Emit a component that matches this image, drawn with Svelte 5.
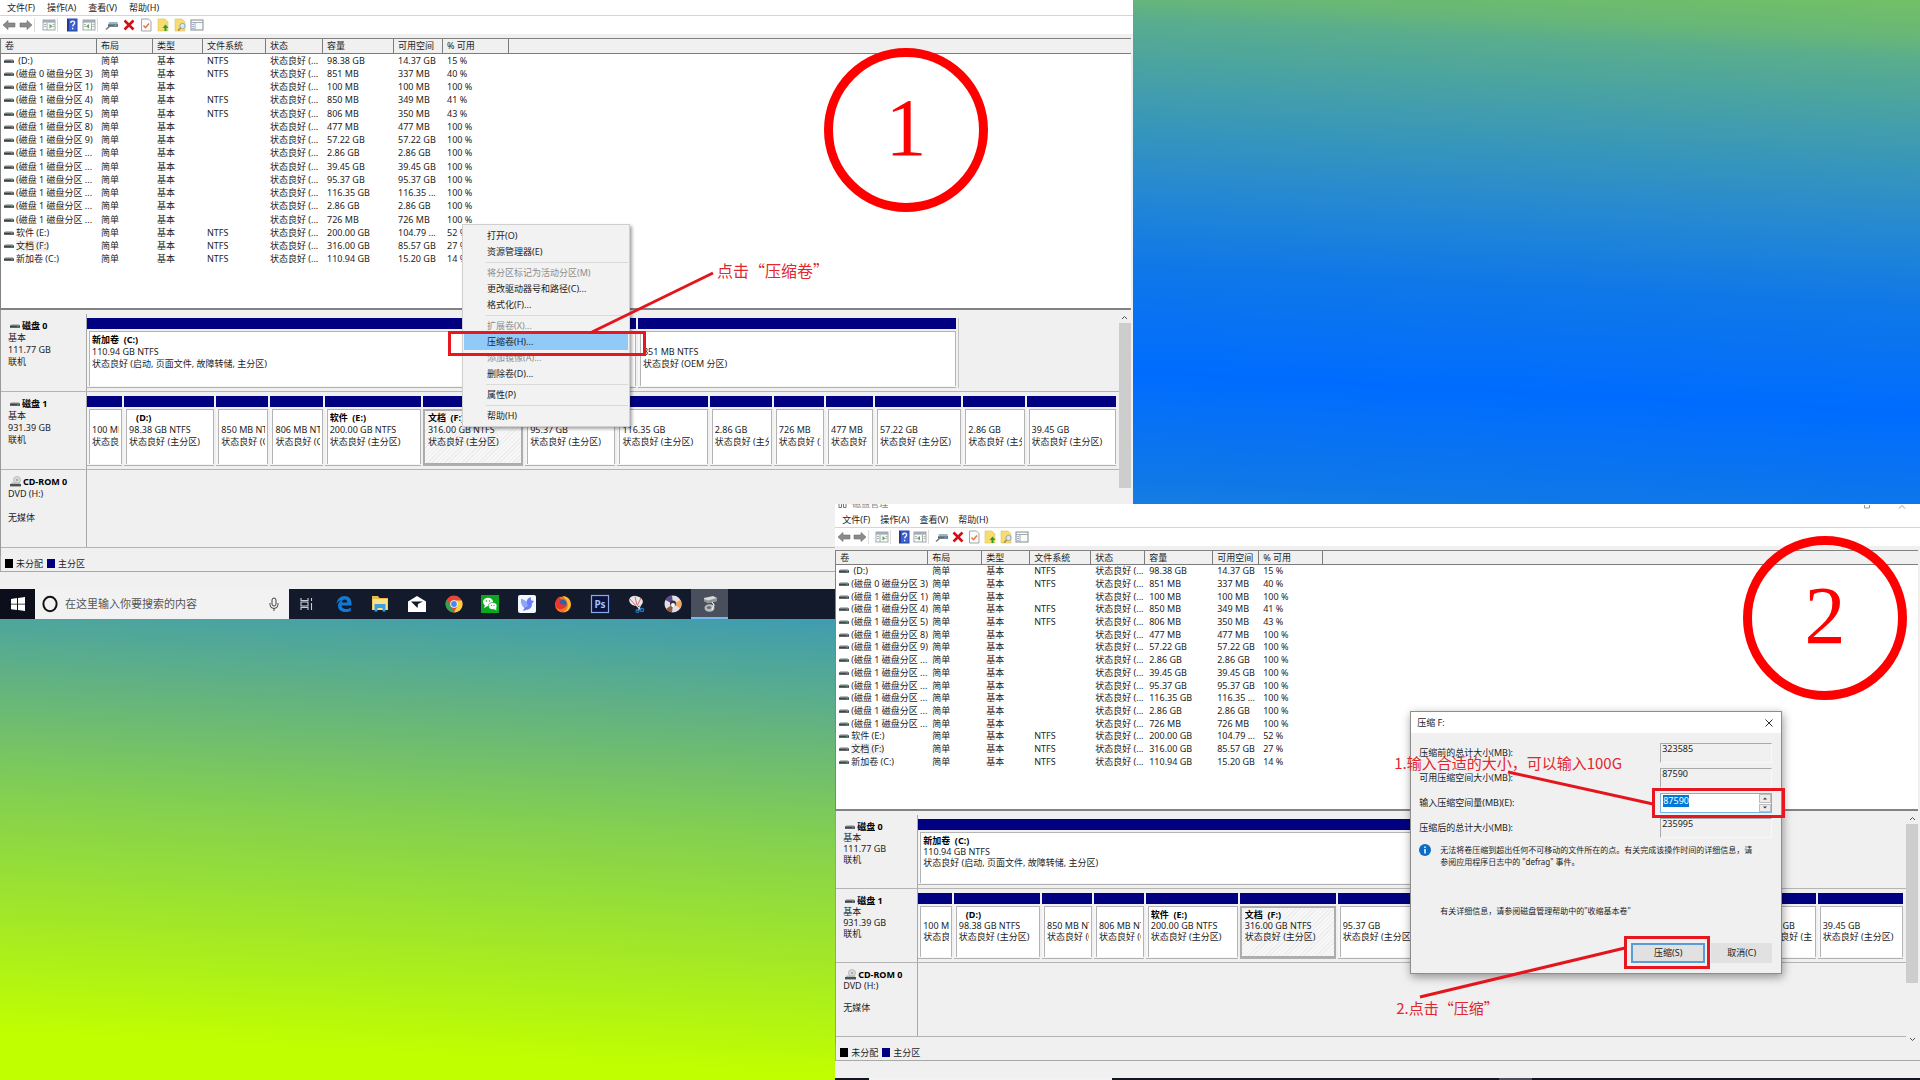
<script>
  import { onMount } from 'svelte';

  let shrinkInput;
  let amount = $state('87590');

  const menus = ['文件(F)', '操作(A)', '查看(V)', '帮助(H)'];

  const tools = ['back', 'forward', '|', 'console', '|', 'help', 'panel', '|', 'drive', 'delete', 'check', 'folderUp', 'folderFind', 'props'];

  const headers = ['卷', '布局', '类型', '文件系统', '状态', '容量', '可用空间', '% 可用'];

  const volumes = [
    ['\u00a0(D:)', 'NTFS', '98.38 GB', '14.37 GB', '15 %'],
    ['(磁盘 0 磁盘分区 3)', 'NTFS', '851 MB', '337 MB', '40 %'],
    ['(磁盘 1 磁盘分区 1)', '', '100 MB', '100 MB', '100 %'],
    ['(磁盘 1 磁盘分区 4)', 'NTFS', '850 MB', '349 MB', '41 %'],
    ['(磁盘 1 磁盘分区 5)', 'NTFS', '806 MB', '350 MB', '43 %'],
    ['(磁盘 1 磁盘分区 8)', '', '477 MB', '477 MB', '100 %'],
    ['(磁盘 1 磁盘分区 9)', '', '57.22 GB', '57.22 GB', '100 %'],
    ['(磁盘 1 磁盘分区 ...', '', '2.86 GB', '2.86 GB', '100 %'],
    ['(磁盘 1 磁盘分区 ...', '', '39.45 GB', '39.45 GB', '100 %'],
    ['(磁盘 1 磁盘分区 ...', '', '95.37 GB', '95.37 GB', '100 %'],
    ['(磁盘 1 磁盘分区 ...', '', '116.35 GB', '116.35 ...', '100 %'],
    ['(磁盘 1 磁盘分区 ...', '', '2.86 GB', '2.86 GB', '100 %'],
    ['(磁盘 1 磁盘分区 ...', '', '726 MB', '726 MB', '100 %'],
    ['软件 (E:)', 'NTFS', '200.00 GB', '104.79 ...', '52 %'],
    ['文档 (F:)', 'NTFS', '316.00 GB', '85.57 GB', '27 %'],
    ['新加卷 (C:)', 'NTFS', '110.94 GB', '15.20 GB', '14 %'],
  ];

  const disks = [
    {
      name: '磁盘 0', kind: '基本', size: '111.77 GB', state: '联机',
      parts: [
        { w: 549, title: '新加卷  (C:)', size: '110.94 GB NTFS', state: '状态良好 (启动, 页面文件, 故障转储, 主分区)' },
        { w: 318, title: '', size: '851 MB NTFS', state: '状态良好 (OEM 分区)' },
        { w: 157, free: true },
      ],
    },
    {
      name: '磁盘 1', kind: '基本', size: '931.39 GB', state: '联机',
      parts: [
        { w: 35, title: '', size: '100 MB', state: '状态良好' },
        { w: 90, title: '   (D:)', size: '98.38 GB NTFS', state: '状态良好 (主分区)' },
        { w: 52, title: '', size: '850 MB NTFS', state: '状态良好 (OEM 分区)' },
        { w: 52, title: '', size: '806 MB NTFS', state: '状态良好 (OEM 分区)' },
        { w: 96, title: '软件  (E:)', size: '200.00 GB NTFS', state: '状态良好 (主分区)' },
        { w: 100, title: '文档  (F:)', size: '316.00 GB NTFS', state: '状态良好 (主分区)', selected: true },
        { w: 90, title: '', size: '95.37 GB', state: '状态良好 (主分区)' },
        { w: 90, title: '', size: '116.35 GB', state: '状态良好 (主分区)' },
        { w: 62, title: '', size: '2.86 GB', state: '状态良好 (主分区)' },
        { w: 50, title: '', size: '726 MB', state: '状态良好 (主分区)' },
        { w: 47, title: '', size: '477 MB', state: '状态良好' },
        { w: 86, title: '', size: '57.22 GB', state: '状态良好 (主分区)' },
        { w: 61, title: '', size: '2.86 GB', state: '状态良好 (主分区)' },
        { w: 89, title: '', size: '39.45 GB', state: '状态良好 (主分区)' },
      ],
    },
    { name: 'CD-ROM 0', kind: 'DVD (H:)', size: '', state: '无媒体', cd: true, parts: [] },
  ];

  const contextMenu = [
    { label: '打开(O)' },
    { label: '资源管理器(E)' },
    null,
    { label: '将分区标记为活动分区(M)', disabled: true },
    { label: '更改驱动器号和路径(C)...' },
    { label: '格式化(F)...' },
    null,
    { label: '扩展卷(X)...', disabled: true },
    { label: '压缩卷(H)...', active: true },
    { label: '添加镜像(A)...', disabled: true },
    { label: '删除卷(D)...' },
    null,
    { label: '属性(P)' },
    null,
    { label: '帮助(H)' },
  ];

  const apps = ['taskview', 'edge', 'explorer', 'mail', 'chrome', 'wechat', 'bird', 'firefox', 'ps', 'snip', 'disc', 'diskmgmt'];

  const colsOne = [96, 56, 50, 63, 57, 71, 49, 66];
  const colsTwo = [92, 54, 48, 61, 54, 68, 46, 64];

  onMount(() => {
    shrinkInput.focus();
    shrinkInput.select();
  });
</script>

{#snippet driveIcon()}
  <svg class="drive" width="10" height="6" viewBox="0 0 10 6" aria-hidden="true">
    <path d="M1.5 1h7l1.5 1.6H0z" fill="#b9bcbc" />
    <rect y="2.4" width="10" height="2.4" fill="#3d4446" />
    <rect x="7" y="3" width="2" height="1" fill="#3f8a62" />
  </svg>
{/snippet}

{#snippet toolIcon(name)}
  <svg width="14" height="14" viewBox="0 0 14 14" aria-hidden="true">
    {#if name === 'back'}
      <path d="M1 7l5-4.6v2.6h7v4H6v2.6z" fill="#8b8b8b" stroke="#6f6f6f" stroke-width=".6" />
    {:else if name === 'forward'}
      <path d="M13 7L8 2.4v2.6H1v4h7v2.6z" fill="#8b8b8b" stroke="#6f6f6f" stroke-width=".6" />
    {:else if name === 'console' || name === 'panel'}
      <rect x="1" y="2" width="12" height="10" fill="#f7f9f7" stroke="#a3a9ae" />
      <rect x="1" y="2" width="12" height="2.6" fill="#a4abb3" />
      <path d={name === 'console' ? 'M5 5v7' : 'M9.5 5v7'} stroke="#a3a9ae" />
      <path d={name === 'console' ? 'M7.500 6v4.400L10.500 8.200z' : 'M7 6v4.400L4 8.200z'} fill="#5aab50" />
      <path d="M2 6.5h2M2 8.500h2M10.500 6.500h2M10.500 8.500h2" stroke="#9aa2aa" stroke-width=".8" />
    {:else if name === 'help'}
      <rect x="2.5" y="1" width="9.5" height="12" fill="#3f60d2" stroke="#2a45a6" />
      <rect x="2" y="1" width="2" height="12" fill="#1f3a96" />
      <path d="M5.8 5c0-2.6 4-2.4 3.8 0-.1 1.4-1.9 1.5-1.9 3.2M7.700 9.800v1.400" fill="none" stroke="#fff" stroke-width="1.3" />
    {:else if name === 'drive'}
      <path d="M4 4h8.500L13 7H3z" fill="#9fb4c0" />
      <rect x="3" y="6.400" width="10" height="2.400" fill="#536c78" />
      <path d="M1 11.500l4-3.500" stroke="#7a7a7a" stroke-width="1.600" />
      <rect x="9.500" y="7" width="2" height="1" fill="#58c28c" />
    {:else if name === 'delete'}
      <path d="M2.5 2.5l9 9M11.5 2.5l-9 9" stroke="#cf1017" stroke-width="2.6" />
    {:else if name === 'check'}
      <path d="M2.5 1h7l2.500 2.500V13h-9.500z" fill="#fbfbfb" stroke="#a5a5a5" />
      <path d="M4.5 7.500l2 2.200L10 5.500" fill="none" stroke="#e0723a" stroke-width="1.4" />
    {:else if name === 'folderUp'}
      <path d="M2 1h7l3 3v9H2z" fill="#f7dc6f" stroke="#e0c254" stroke-width=".6" />
      <path d="M9.500 6.500L12.500 10h-2v3h-2v-3h-2z" fill="#2e9c2c" />
    {:else if name === 'folderFind'}
      <path d="M2 1h7l3 3v9H2z" fill="#f7dc6f" stroke="#e0c254" stroke-width=".6" />
      <circle cx="9.500" cy="8" r="2.600" fill="#dceaf4" stroke="#8ba6b8" />
      <path d="M7.500 10L5 12.800" stroke="#9b8a58" stroke-width="1.400" />
    {:else}
      <rect x="1" y="2" width="12" height="10" fill="#fafafa" stroke="#828b92" />
      <path d="M1 4.500h12M5 4.500V12" stroke="#a3abb1" />
      <path d="M2.200 6.500h1.600M2.200 8.500h1.600M2.200 10.400h1.600" stroke="#6189b5" stroke-width=".8" />
    {/if}
  </svg>
{/snippet}

{#snippet appIcon(name)}
  <svg width="20" height="20" viewBox="0 0 20 20" aria-hidden="true">
    {#if name === 'taskview'}
      <g fill="none" stroke="#c9ccd3" stroke-width="1.1">
        <path d="M4 4v2.500h7V4M4 16v-2.500h7V16" />
        <rect x="4" y="8" width="7" height="4" />
        <path d="M14.500 4v3M14.500 9v7" />
      </g>
    {:else if name === 'edge'}
      <path d="M2.500 10C3 5 6.500 2 10.500 2c4.500 0 7 3 7 7.500v2H7.500c.2 2.200 2 3.500 4.500 3.500 1.800 0 3.300-.5 4.700-1.300v3.200C15.200 17.700 13.500 18 11.500 18c-4.500 0-7.500-2.500-7.500-6.300 0-2.500 1.500-4.500 3.600-5.500C5 6.700 3.500 8 2.500 10zM7.700 8.500h5.700c0-2-1-3-2.700-3s-2.700 1.200-3 3z" fill="#0f7bd7" />
    {:else if name === 'explorer'}
      <path d="M2 2h6l1.500 2H18v12H2z" fill="#e9b949" />
      <rect x="2.500" y="5" width="15" height="11" fill="#fbe08b" />
      <path d="M4.500 17.500V10h11v7.500h-3V14h-5v3.500z" fill="#3b9fe0" />
    {:else if name === 'mail'}
      <path d="M1 7.500L10 2l9 5.500V18H1z" fill="#fff" />
      <path d="M4 7.500h12L11 10l-.5 4z" fill="#111a2c" />
    {:else if name === 'chrome'}
      <circle cx="10" cy="10" r="8.500" fill="#e2493b" />
      <path d="M3 5.500l4 7.500 3 5.500A8.500 8.500 0 0 1 3 5.500z" fill="#2da456" />
      <path d="M17.800 6.500A8.500 8.500 0 0 1 10 18.500l3.500-7L12 6.500z" fill="#fbd03b" />
      <circle cx="10" cy="10" r="3.800" fill="#fff" />
      <circle cx="10" cy="10" r="2.900" fill="#4688f1" />
    {:else if name === 'wechat'}
      <rect x="1" y="1" width="18" height="18" fill="#0aa81c" />
      <ellipse cx="8" cy="8" rx="5" ry="4.200" fill="#fff" />
      <path d="M5 11l-1 3 3-1.500z" fill="#fff" />
      <ellipse cx="12.800" cy="12" rx="4.200" ry="3.500" fill="#fff" stroke="#0aa81c" stroke-width=".7" />
      <path d="M14 15l2.500 1.500L16 13.500z" fill="#fff" />
      <g fill="#0aa81c">
        <circle cx="6.400" cy="7" r=".7" /><circle cx="9.500" cy="7" r=".7" />
        <circle cx="11.500" cy="11.300" r=".6" /><circle cx="14" cy="11.300" r=".6" />
      </g>
    {:else if name === 'bird'}
      <rect x="1" y="1" width="18" height="18" rx="2" fill="#f4f7ff" />
      <path d="M4 5c2.500.5 4 1.500 5.500 3 .3-2.500 1.800-4.500 4.500-5-.4 1.500 0 2.500.5 3.500L17 7l-2 2.500c0 4-2 6-6 6.500l-3 1c.5-1.500 1-2 1.500-3C5 12 4 9 4 5z" fill="#6b7ff2" />
      <path d="M4 5c2.500.5 4 1.500 5.500 3l1.500 4-3.500 2C5 12 4 9 4 5z" fill="#8aa6fb" />
    {:else if name === 'firefox'}
      <circle cx="10" cy="10.500" r="8" fill="#f4741f" />
      <path d="M10 2c5 .5 8 4 7.700 9-.5 4-3.700 7-7.700 7.300 4-2 5.500-5 4.500-9C14 6 12 4.500 10 2z" fill="#fcc22d" />
      <circle cx="9.500" cy="9.800" r="4.200" fill="#2c5fb8" />
      <path d="M2.500 8c1-3 2.500-4.500 4-5.500 0 2 1 2.500 3 3-2 .5-3 1.500-2.500 3 .5 2 3 3 6 1.500-1 4-4 6-7 5-3-1-4-4-3.500-7z" fill="#e8362b" />
    {:else if name === 'ps'}
      <rect x="1.500" y="1.500" width="17" height="17" fill="#0a1340" stroke="#8aa9e8" stroke-width="1.200" />
      <text x="10" y="14" class="ps-text">Ps</text>
    {:else if name === 'snip'}
      <ellipse cx="9" cy="7" rx="7" ry="5" transform="rotate(15 9 7)" fill="#ece6e6" />
      <path d="M3 5l6 7M8 2.500l2 9M14 4l-4 8" fill="none" stroke="#cf5b63" stroke-width=".9" />
      <path d="M9 11l5 5M14 10l-3 7" stroke="#d8dadd" stroke-width="1.200" />
      <circle cx="15" cy="16" r="1.700" fill="none" stroke="#1f7cc4" stroke-width="1.200" />
      <circle cx="10.500" cy="17" r="1.500" fill="none" stroke="#1f7cc4" stroke-width="1.200" />
    {:else if name === 'disc'}
      <circle cx="10" cy="10" r="8.500" fill="#e4dfe6" />
      <path d="M10 10L2.500 6A8.500 8.500 0 0 1 9 1.500z" fill="#5c4a8c" />
      <path d="M10 10l7.500-4a8.500 8.500 0 0 1 0 8.500z" fill="#efa866" />
      <path d="M10 10l-7 5a8.500 8.500 0 0 0 6 3.500z" fill="#8f5d43" />
      <circle cx="10" cy="9.500" r="3" fill="#2e3146" />
      <circle cx="10" cy="11" r="2" fill="#fff" />
    {:else}
      <path d="M4 4l9-2 4 2v3l-9 2-4-2z" fill="#d7d9da" />
      <path d="M4 5l4 1.500L17 4v3L8 9 4 7z" fill="#8f9496" />
      <ellipse cx="9.500" cy="14" rx="5" ry="3.800" fill="#b9bdbf" />
      <ellipse cx="9" cy="13.500" rx="2.200" ry="1.600" fill="#6a7073" />
      <path d="M12 8l2 3-2 5" fill="none" stroke="#eceeef" stroke-width="1.200" />
    {/if}
  </svg>
{/snippet}

{#snippet console_(cols)}
  <div class="menubar">
    {#each menus as label}
      <button type="button">{label}</button>
    {/each}
  </div>
  <div class="toolbar">
    {#each tools as name}
      {#if name === '|'}
        <span class="tool-sep"></span>
      {:else}
        <button type="button" class="tool" aria-label={name}>{@render toolIcon(name)}</button>
      {/if}
    {/each}
  </div>

  <div class="list">
    <table>
      <colgroup>
        {#each cols as w}<col style="width: {w}px" />{/each}
        <col />
      </colgroup>
      <thead>
        <tr>
          {#each headers as h}<th>{h}</th>{/each}
          <th></th>
        </tr>
      </thead>
      <tbody>
        {#each volumes as [name, fs, size, free, pct]}
          <tr>
            <td class="name">{@render driveIcon()}<span class:hot={name === '文档 (F:)'}>{name}</span></td>
            <td>简单</td>
            <td>基本</td>
            <td>{fs}</td>
            <td>状态良好 (...</td>
            <td>{size}</td>
            <td>{free}</td>
            <td>{pct}</td>
            <td></td>
          </tr>
        {/each}
      </tbody>
    </table>
  </div>

  <div class="graph">
    <div class="disks">
      {#each disks as disk}
        <div class="disk">
          <div class="disk-label">
            <strong>
              {#if disk.cd}
                <svg class="drive" width="11" height="12" viewBox="0 0 11 12" aria-hidden="true">
                  <circle cx="7" cy="4" r="3.500" fill="#d9dbdb" stroke="#a9acac" stroke-width=".7" />
                  <circle cx="7" cy="4" r="1" fill="#9a9d9d" />
                  <path d="M1.500 6.500h8l1 2H.500z" fill="#b9bcbc" />
                  <rect y="8" width="11" height="2.400" fill="#4b5254" />
                </svg>
              {:else}
                {@render driveIcon()}
              {/if}
              {disk.name}
            </strong>
            <span>{disk.kind}</span>
            <span>{disk.size}</span>
            <span>{disk.state}</span>
          </div>
          <div class="parts">
            {#each disk.parts as p}
              <div class="part" class:free={p.free} class:selected={p.selected} style="flex-grow: {p.w}">
                {#if !p.free}
                  <div class="bar"></div>
                  <div class="box">
                    <strong>{p.title}</strong>
                    <span>{p.size}</span>
                    <span>{p.state}</span>
                  </div>
                {/if}
              </div>
            {/each}
          </div>
        </div>
      {/each}
    </div>
    <div class="scroll">
      <svg width="7" height="5" viewBox="0 0 7 5"><path d="M1 4l2.500-2.500L6 4" fill="none" stroke="#505050" /></svg>
      <div class="thumb"></div>
      <svg width="7" height="5" viewBox="0 0 7 5"><path d="M1 1l2.500 2.500L6 1" fill="none" stroke="#505050" /></svg>
    </div>
  </div>

  <div class="legend">
    <i class="key black"></i><span>未分配</span>
    <i class="key navy"></i><span>主分区</span>
  </div>
  <div class="status"></div>
{/snippet}

<main class="desktop">
  <section class="win one">
    {@render console_(colsOne)}

    <div class="taskbar">
      <button type="button" class="start" aria-label="start">
        <svg width="14" height="14" viewBox="0 0 14 14"><path d="M0 2l6-.9v5.600H0zM7 1l7-1v6.700H7zM0 7.500h6v5.600L0 12.200zM7 7.500h7V14l-7-.9z" fill="#fff" /></svg>
      </button>
      <label class="search">
        <svg width="16" height="18" viewBox="0 0 16 18"><ellipse cx="8" cy="9" rx="6.600" ry="7.200" fill="none" stroke="#111" stroke-width="2" /></svg>
        <input type="text" placeholder="在这里输入你要搜索的内容" aria-label="搜索" />
        <svg width="10" height="14" viewBox="0 0 10 14"><rect x="3" y="1" width="4" height="8" rx="2" fill="none" stroke="#444" /><path d="M1 6v1.500a4 4 0 0 0 8 0V6M5 11.500V14" fill="none" stroke="#444" /></svg>
      </label>
      <div class="apps">
        {#each apps as name}
          <button type="button" class:running={name === 'diskmgmt'} aria-label={name}>{@render appIcon(name)}</button>
        {/each}
      </div>
    </div>

    <ul class="context">
      {#each contextMenu as item}
        {#if item}
          <li><button type="button" disabled={item.disabled} class:active={item.active}>{item.label}</button></li>
        {:else}
          <li class="rule"></li>
        {/if}
      {/each}
    </ul>

    <div class="mark mark-shrink"></div>
    <svg class="lines" aria-hidden="true"><path d="M592 332L713 273" /></svg>
    <p class="note note-menu">点击“压缩卷”</p>
    <div class="step">1</div>
  </section>

  <section class="win two">
    <div class="titlebar">
      <svg width="9" height="5" viewBox="0 0 9 5"><path d="M1 0v3.500h2.500V0M5.500 0v3.500H8V0" fill="none" stroke="#777" /></svg>
      <span>磁盘管理</span>
      <svg width="8" height="4" viewBox="0 0 8 4"><path d="M1.500 0v3h5V0" fill="none" stroke="#999" /></svg>
      <svg width="8" height="4" viewBox="0 0 8 4"><path d="M1 3.500L4 .5l3 3" fill="none" stroke="#999" /></svg>
    </div>
    {@render console_(colsTwo)}
    <div class="taskbar-edge"><i></i><i></i><i></i></div>

    <div class="dialog" role="dialog" aria-label="压缩 F:">
      <header>
        <span>压缩 F:</span>
        <button type="button" aria-label="关闭">
          <svg width="8" height="8" viewBox="0 0 8 8"><path d="M.5.5l7 7M7.500.5l-7 7" stroke="#333" /></svg>
        </button>
      </header>
      <div class="fields">
        <label for="before">压缩前的总计大小(MB):</label>
        <input id="before" readonly value="323585" />
        <label for="avail">可用压缩空间大小(MB):</label>
        <input id="avail" readonly value="87590" />
        <label for="amount">输入压缩空间量(MB)(E):</label>
        <div class="spin">
          <input id="amount" type="text" bind:value={amount} bind:this={shrinkInput} />
          <div class="arrows">
            <button type="button" aria-label="增加"><svg width="4" height="3" viewBox="0 0 4 3"><path d="M0 2.500L2 .5l2 2z" fill="#333" /></svg></button>
            <button type="button" aria-label="减少"><svg width="4" height="3" viewBox="0 0 4 3"><path d="M0 .5l2 2 2-2z" fill="#333" /></svg></button>
          </div>
        </div>
        <label for="after">压缩后的总计大小(MB):</label>
        <input id="after" readonly value="235995" />
      </div>
      <div class="info">
        <svg width="12" height="12" viewBox="0 0 12 12"><circle cx="6" cy="6" r="6" fill="#0a6cc4" /><path d="M6 2.400v1.500M6 5v4.600" stroke="#fff" stroke-width="1.500" /></svg>
        <p>无法将卷压缩到超出任何不可移动的文件所在的点。有关完成该操作时间的详细信息，请<br />参阅应用程序日志中的 "defrag" 事件。</p>
      </div>
      <p class="more">有关详细信息，请参阅磁盘管理帮助中的"收缩基本卷"</p>
      <footer>
        <button type="button" class="primary">压缩(S)</button>
        <button type="button">取消(C)</button>
      </footer>
    </div>

    <div class="mark mark-amount"></div>
    <div class="mark mark-ok"></div>
    <svg class="lines" aria-hidden="true"><path d="M673 268L818 300M585 493L790 444" /></svg>
    <p class="note note-size">1.输入合适的大小，可以输入100G</p>
    <p class="note note-ok">2.点击“压缩”</p>
    <div class="step">2</div>
  </section>
</main>

<style>
  :global(body) { margin: 0; }
  .desktop {
    position: relative; height: 100vh; overflow: hidden;
    font: 9px/12px "Noto Sans", "Noto Sans CJK SC", sans-serif; color: #1c1c1c;
    background: linear-gradient(183deg,
      rgb(98,178,130) 3%, rgb(66,158,172) 11%, rgb(39,138,208) 19%, rgb(15,120,232) 26%,
      rgb(0,108,255) 35%,
      rgb(15,120,232) 44%, rgb(39,138,208) 51%, rgb(66,158,172) 58%, rgb(98,178,130) 66%,
      rgb(132,208,80) 76%, rgb(192,255,0) 96%);
  }
  .desktop::before {
    content: ''; position: absolute; inset: 0;
    background: linear-gradient(183deg, rgba(120,198,90,.7), rgba(98,178,130,0) 5%);
  }
  button, input {
    font: inherit; color: inherit; border: 0; padding: 0; margin: 0;
    background: none; border-radius: 0; min-width: 0; outline: none;
  }
  p, ul { margin: 0; padding: 0; list-style: none; }
  svg { display: block; flex-shrink: 0; }

  .win { position: absolute; background: #f0f0f0; }
  .one {
    top: 0; left: 0; width: 59%;
    --line: 12px; --tool: 17px; --menu-gap: 12px; --pad: 0px; --head: 15px;
    --table: 227px; --list: 272px; --disk: 78px; --label: 86px; --thumb: 165px;
  }
  .two {
    top: 504px; left: 43.5%; right: 0;
    --line: 11px; --tool: 16px; --menu-gap: 10px; --pad: 1px; --head: 14px;
    --table: 217px; --list: 261px; --disk: 74px; --label: 82px; --thumb: 159px;
  }

  .titlebar {
    display: flex; align-items: flex-end; gap: 5px; height: 5px;
    padding: 0 14px 3px 3px; overflow: hidden; background: #fff;
    line-height: 10px; color: #888;
  }
  .titlebar span { margin-right: auto; }
  .titlebar svg + svg { margin-left: 22px; }
  .titlebar svg:first-child { align-self: flex-start; }

  .menubar {
    display: flex; gap: var(--menu-gap); height: 15px; padding-left: 7px;
    background: #fff; border-bottom: 1px solid #d4d4d4;
  }
  .toolbar {
    display: flex; align-items: center; height: 18px; padding-left: var(--pad);
    background: #fff; border-bottom: 4px solid #f0f0f0;
  }
  .tool { width: var(--tool); display: flex; justify-content: center; }
  .tool-sep { width: 6px; height: 14px; border-left: 1px solid #dcdcdc; box-sizing: border-box; }

  .list {
    height: var(--list); margin-right: 2px; background: #fff;
    border: 1px solid #828282; border-width: 1px 0 2px 1px; box-sizing: border-box;
  }
  table { width: 100%; height: var(--table); table-layout: fixed; border-collapse: separate; border-spacing: 0; }
  th {
    height: var(--head); padding: 0 0 0 4px; box-sizing: border-box; font-weight: 400; text-align: left;
    background: #f0f0f0; border-right: 1px solid #7c7c7c; border-bottom: 1px solid #7c7c7c;
  }
  th:last-child { border-right: 0; }
  td { padding: 0 0 0 4px; white-space: nowrap; overflow: hidden; line-height: 12px; }
  .name { padding-left: 3px; }
  .name :global(svg) { display: inline-block; margin-right: 2px; }
  .hot { background: #f2f2f2; }

  .graph { display: flex; border-left: 1px solid #9a9a9a; }
  .disks { flex: 1; min-width: 0; padding: 4px 0 8px; }
  .disk { display: flex; height: var(--disk); box-sizing: border-box; border-bottom: 1px solid #b4b4b4; }
  .disk-label {
    width: var(--label); flex-shrink: 0; box-sizing: border-box; padding: 6px 0 0 7px;
    border-right: 1px solid #a8a8a8; line-height: var(--line);
  }
  .disk-label span, .disk-label strong { display: block; min-height: var(--line); }
  .disk-label strong { display: flex; align-items: center; gap: 2px; padding-left: 2px; height: var(--line); color: #000; }
  .parts { flex: 1; min-width: 0; display: flex; gap: 2px; padding: 4px 3px 3px 0; }
  .part { flex: 0 1 0; min-width: 0; display: flex; flex-direction: column; background: #f6f6f6; border-bottom: 1px solid #b0b0b0; }
  .part.free { background: none; border-bottom: 0; border-left: 1px solid #c4c4c4; }
  .bar { height: 11px; background: #000080; border-bottom: 2px solid #f0f0f0; }
  .box {
    flex: 1; display: flex; flex-direction: column; margin: 0 0 1px 2px; padding: 2px 2px 0; overflow: hidden;
    background: #fff; border: 1px solid #b4b4b4; border-width: 1px 1px 0 1px; line-height: var(--line);
  }
  .box strong, .box span { height: var(--line); overflow: hidden; white-space: pre; }
  .box strong { color: #000; }
  .selected .box {
    border: 2px solid #adadad; margin: 0; padding: 1px 2px 0 3px;
    background: repeating-linear-gradient(135deg, #f7f7f7 0 2px, #ededed 2px 3px);
  }

  .scroll { width: 12px; margin-right: 2px; display: flex; flex-direction: column; align-items: center; padding: 5px 0 3px; box-sizing: border-box; }
  .thumb { width: 100%; height: var(--thumb); margin: 3px 0 auto; background: #cdcdcd; }

  .legend {
    display: flex; align-items: center; height: 15px; padding-left: 4px;
    border: 1px solid #a8a8a8; border-width: 0 0 1px 1px;
  }
  .key { width: 8px; height: 9px; margin-right: 3px; }
  .legend span { margin-right: 4px; }
  .black { background: #000; }
  .navy { background: #000080; }
  .status { height: 17px; }

  .taskbar { display: flex; height: 30px; background: #131a2c; }
  .start { width: 35px; background: #0d0e1c; display: flex; align-items: center; justify-content: center; }
  .search { width: 254px; box-sizing: border-box; display: flex; align-items: center; padding: 0 10px 0 7px; background: #f2f2f2; }
  .search input { flex: 1; margin-left: 7px; font-size: 11px; }
  .search input::placeholder { color: #555; opacity: 1; }
  .apps { width: 439px; display: grid; grid-template-columns: repeat(12, 1fr); }
  .apps button { display: flex; align-items: center; justify-content: center; }
  .apps .running { background: #4a4f5e; box-shadow: inset 0 -2px #76b9ed; }
  .ps-text { font: 700 10px "Noto Sans", sans-serif; fill: #9fc0f5; text-anchor: middle; }

  .taskbar-edge { display: flex; height: 4px; background: #14161f; }
  .taskbar-edge i:nth-child(1) { width: 34px; }
  .taskbar-edge i:nth-child(2) { width: 243px; background: #f2f2f2; }
  .taskbar-edge i:nth-child(3) { width: 33px; margin-left: 387px; background: #4a4d55; }

  .context {
    position: absolute; left: 462px; top: 224px; width: 164px; padding: 3px 1px 2px;
    background: #f2f2f2; border: 1px solid #cfcfcf; box-shadow: 2px 2px 3px rgba(0,0,0,.35);
  }
  .context button { display: block; width: 100%; height: 16px; padding-left: 23px; text-align: left; }
  .context button:disabled { color: #8d8d8d; }
  .context .active { background: #91c9f7; }
  .rule { height: 5px; margin-left: 22px; background: linear-gradient(#dadada, #dadada) 0 2px / 100% 1px no-repeat; }

  .dialog {
    position: absolute; left: 575px; top: 207px; width: 370px; height: 261px;
    display: flex; flex-direction: column;
    background: #f0f0f0; border: 1px solid #8c8c8c; box-shadow: 1px 3px 9px rgba(0,0,0,.4);
  }
  .dialog header { display: flex; justify-content: space-between; align-items: center; height: 21px; padding: 0 8px 0 6px; background: #fff; }
  .fields {
    display: grid; grid-template-columns: 1fr 112px; grid-auto-rows: 20px; row-gap: 5px;
    padding: 10px 9px 0 8px;
  }
  .fields label { line-height: 20px; }
  .fields > input {
    width: 100%; box-sizing: border-box; height: 20px; padding: 0 0 9px 1px; line-height: 9px;
    border: 1px solid #a9a9a9; border-right-color: #f8f8f8; border-bottom-color: #f8f8f8;
  }
  .spin { display: flex; height: 20px; box-sizing: border-box; border: 1px solid #7ab2e2; background: #fff; }
  .spin input { flex: 1; padding: 0 0 4px 2px; }
  .spin input::selection { background: #0078d7; color: #fff; }
  .arrows { width: 12px; display: flex; flex-direction: column; gap: 1px; }
  .arrows button { flex: 1; display: flex; align-items: center; justify-content: center; background: #ececec; border: 1px solid #bdbdbd; }
  .info { display: flex; gap: 9px; padding: 6px 0 0 8px; }
  .info p, .more { font-size: 8px; line-height: 12px; white-space: nowrap; }
  .more { padding: 37px 0 0 29px; }
  .dialog footer { display: flex; justify-content: flex-end; gap: 6px; margin-top: auto; padding: 0 9px 10px 0; }
  .dialog footer button { width: 61px; height: 20px; background: #e1e1e1; }
  .dialog footer .primary { width: 74px; border: 2px solid #5b9bd8; }

  .mark { position: absolute; box-sizing: border-box; border: 3px solid #e8161e; }
  .mark-shrink { left: 448px; top: 331px; width: 198px; height: 25px; }
  .mark-amount { left: 817px; top: 284px; width: 133px; height: 30px; }
  .mark-ok { left: 789px; top: 432px; width: 86px; height: 33px; }
  .lines { position: absolute; left: 0; top: 0; width: 100%; height: 576px; pointer-events: none; }
  .lines path { fill: none; stroke: #e3161e; stroke-width: 3; }
  .note { position: absolute; font: 16px/20px "Noto Sans CJK SC", sans-serif; color: #e3262d; white-space: nowrap; }
  .two .note { font-size: 15px; }
  .note-menu { left: 717px; top: 260px; }
  .note-size { left: 559px; top: 249px; }
  .note-ok { left: 561px; top: 494px; }
  .step {
    position: absolute; box-sizing: border-box; width: 164px; height: 164px;
    border: 9px solid #f00; border-radius: 50%; color: #f00;
    font: 82px/142px "Liberation Serif", serif; text-align: center;
  }
  .one .step { left: 824px; top: 48px; }
  .two .step { right: 13px; top: 32px; }
</style>
